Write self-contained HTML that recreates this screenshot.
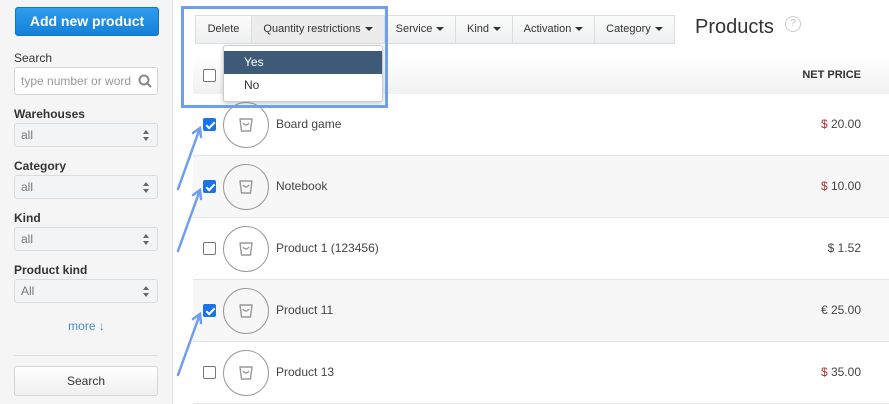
<!DOCTYPE html><html><head><style>
*{box-sizing:border-box;margin:0;padding:0}
body{width:889px;height:404px;overflow:hidden;font-family:"Liberation Sans",Arial,sans-serif;background:#fff;position:relative;font-size:12px;color:#333}
.side{position:absolute;left:0;top:0;width:173px;height:404px;background:#f5f5f5;border-right:1px solid #e2e2e2}
.btn-add{position:absolute;left:15px;top:7px;width:144px;height:29px;border-radius:3px;background:linear-gradient(#2f9cec,#1580d8);border:1px solid #1274c4;color:#fff;font-size:14px;font-weight:bold;text-align:center;line-height:27px}
.lbl{position:absolute;left:14px;font-size:12px;color:#333}
.lbl.b{font-weight:bold}
.inp{position:absolute;left:14px;width:144px;height:24px;border:1px solid #d4d4d4;border-radius:3px;background:#fff;color:#999;padding-left:6px;line-height:22px;font-size:12px}
.sel{position:absolute;left:14px;width:144px;height:24px;border:1px solid #d8dde2;border-radius:3px;background:#f3f4f6;color:#777;padding-left:6px;line-height:22px;font-size:12px}
.sel:after{content:"";position:absolute;right:8px;top:6px;border:3.5px solid transparent;border-bottom:4px solid #666;border-top:0}
.sel:before{content:"";position:absolute;right:8px;top:13px;border:3.5px solid transparent;border-top:4px solid #666;border-bottom:0}
.tb{position:absolute;top:15px;height:29px;border:1px solid #ddd;background:linear-gradient(#fafafa,#eef0f1);display:flex}
.tb div{flex:none;white-space:nowrap;text-align:center;line-height:27px;border-right:1px solid #ddd;font-size:11px;color:#333}
.tb div:last-child{border-right:0}
.car{display:inline-block;border:4px solid transparent;border-top:4px solid #333;border-bottom:0;margin-left:4px;vertical-align:middle}
.row{position:absolute;left:193px;width:696px;height:62px;border-bottom:1px solid #e4e4e4}
.cb{position:absolute;left:10px;top:24px;width:13px;height:13px;border:1px solid #777;border-radius:2px;background:#fff}
.cb.on{background:#1a73e8;border-color:#1a73e8}
.cb.on:after{content:"";position:absolute;left:3.5px;top:0.5px;width:3px;height:7px;border:solid #fff;border-width:0 2px 2px 0;transform:rotate(45deg)}
.ic{position:absolute;left:30px;top:8px;width:46px;height:46px;border:1.5px solid #999;border-radius:50%}
.nm{position:absolute;left:83px;top:23px;font-size:12px;color:#444}
.pr{position:absolute;right:28px;top:23px;font-size:12px;color:#444}
.pr span{color:#a33}
</style></head><body>
<div class="side">
<div class="btn-add">Add new product</div>
<div class="lbl" style="top:51px">Search</div>
<div class="inp" style="top:67px;height:28px;line-height:26px">type number or word
<svg style="position:absolute;right:5px;top:6px" width="14" height="14"><circle cx="6" cy="6" r="4.5" fill="none" stroke="#888" stroke-width="2"/><path d="M9 9l4 4" stroke="#888" stroke-width="2"/></svg></div>
<div class="lbl b" style="top:107px">Warehouses</div>
<div class="sel" style="top:123px">all</div>
<div class="lbl b" style="top:159px">Category</div>
<div class="sel" style="top:175px">all</div>
<div class="lbl b" style="top:211px">Kind</div>
<div class="sel" style="top:227px">all</div>
<div class="lbl b" style="top:263px">Product kind</div>
<div class="sel" style="top:279px">All</div>
<div style="position:absolute;left:0;width:173px;top:319px;text-align:center;color:#4a8ac9;font-size:12px">more &#x2193;</div>
<div style="position:absolute;left:14px;top:355px;width:144px;border-top:1px solid #ddd"></div>
<div style="position:absolute;left:14px;top:366px;width:144px;height:30px;border:1px solid #d4d4d4;border-radius:3px;background:linear-gradient(#fff,#f0f0f0);text-align:center;line-height:28px;font-size:12px">Search</div>
</div>
<div style="position:absolute;left:193px;top:55px;width:696px;height:39px;background:linear-gradient(#fff,#f1f1f1)">
<div class="cb" style="top:14px"></div>
<div style="position:absolute;right:28px;top:14px;font-size:11px;font-weight:bold;color:#333">NET PRICE</div></div>
<div class="tb" style="left:195px;width:480px">
<div style="width:56px">Delete</div><div style="width:133px;background:#ececec">Quantity restrictions<span class="car"></span></div><div style="width:71px">Service<span class="car"></span></div><div style="width:57px">Kind<span class="car"></span></div><div style="width:82px">Activation<span class="car"></span></div><div style="width:79px">Category<span class="car"></span></div></div>
<div style="position:absolute;left:695px;top:16px;font-size:20px;color:#333">Products</div>
<div style="position:absolute;left:785px;top:16px;width:16px;height:16px;border:1px solid #ccc;border-radius:50%;color:#bbb;font-size:10px;text-align:center;line-height:14px">?</div>

<div class="row" style="top:94px;background:#fff"><div class="cb on"></div><div class="ic"></div><div class="nm">Board game</div><div class="pr"><span>$</span> 20.00</div></div>
<div class="row" style="top:156px;background:#f7f7f7"><div class="cb on"></div><div class="ic"></div><div class="nm">Notebook</div><div class="pr"><span>$</span> 10.00</div></div>
<div class="row" style="top:218px;background:#fff"><div class="cb"></div><div class="ic"></div><div class="nm">Product 1 (123456)</div><div class="pr">$ 1.52</div></div>
<div class="row" style="top:280px;background:#f7f7f7"><div class="cb on"></div><div class="ic"></div><div class="nm">Product 11</div><div class="pr">€ 25.00</div></div>
<div class="row" style="top:342px;background:#fff"><div class="cb"></div><div class="ic"></div><div class="nm">Product 13</div><div class="pr"><span>$</span> 35.00</div></div>
<svg style="position:absolute;left:0;top:0" width="889" height="404">
<g fill="none" stroke="#999" stroke-width="1.4" stroke-linejoin="round">
<path d="M240 119h12l-1.5 12h-9z M243 123q3 4 6 0"/><path d="M240 181h12l-1.5 12h-9z M243 185q3 4 6 0"/><path d="M240 243h12l-1.5 12h-9z M243 247q3 4 6 0"/><path d="M240 305h12l-1.5 12h-9z M243 309q3 4 6 0"/><path d="M240 367h12l-1.5 12h-9z M243 371q3 4 6 0"/></g>
<g stroke="#6d9eef" stroke-width="2.5" fill="none" stroke-linecap="round">
<path d="M178 189L200 128M193 133l7-5 1 9"/><path d="M178 251L200 190M193 195l7-5 1 9"/><path d="M178 375L200 314M193 319l7-5 1 9"/></g>
</svg>
<div style="position:absolute;left:223px;top:45px;width:160px;height:57px;background:#fff;border:1px solid #ccc;border-radius:3px;box-shadow:0 2px 5px rgba(0,0,0,.2)">
<div style="margin-top:5px;height:23px;background:#3d5a78;color:#fff;padding-left:20px;line-height:23px;font-size:12px">Yes</div>
<div style="height:23px;padding-left:20px;line-height:23px;font-size:12px;color:#333">No</div></div>
<div style="position:absolute;left:181px;top:6px;width:207px;height:102px;border:3px solid #6d9eef"></div>
</body></html>
